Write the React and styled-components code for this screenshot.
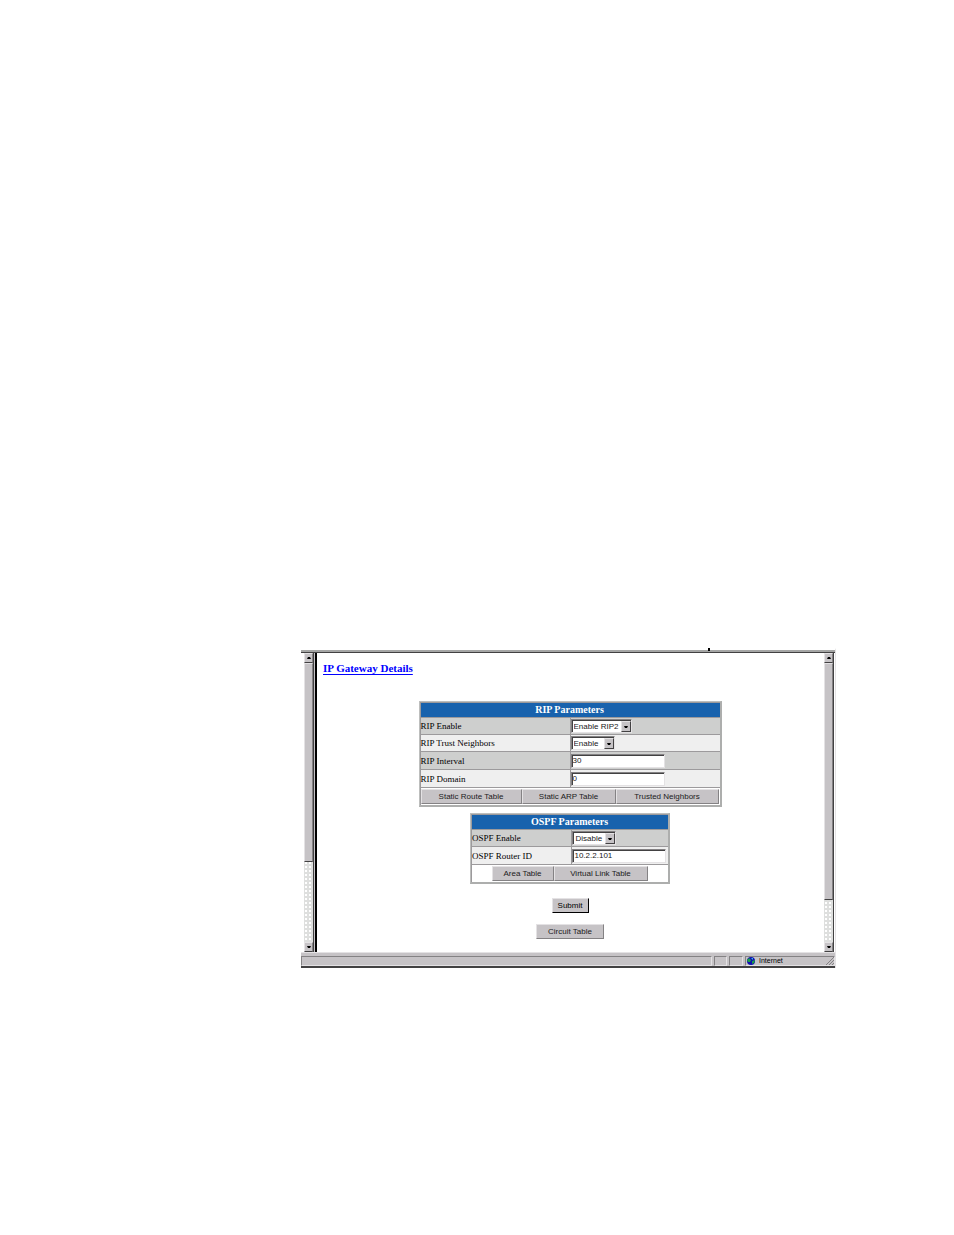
import React from 'react';
import styled, { createGlobalStyle } from 'styled-components';

const colors = {
    face: '#c6c3c6',
    light: '#e4e2e4',
    shadow: '#848284',
    dark: '#424142',
    header: '#1862ad',
    grid: '#9c9a9c',
    rowDark: '#cecfce',
    rowLight: '#efefef',
    link: '#0000ff',
};

const sans = `"Liberation Sans", Arial, sans-serif`;
const serif = `"Liberation Serif", "Times New Roman", serif`;

const GlobalStyle = createGlobalStyle`
    *, *::before, *::after {
        box-sizing: border-box;
    }

    body {
        margin: 0;
        background: #fff;
        font-family: ${serif};
    }
`

const Page = styled('div')`
    padding: 648px 118px 260px 301px;
`

const Window = styled('main')`
    position: relative;
    border-right: 1px solid ${colors.light};
    border-top: 2px solid #fff;
`

const Mark = styled('span')`
    position: absolute;
    top: -2px;
    right: 125px;
    width: 2px;
    height: 3px;
    background: #000;
`

const Frames = styled('div')`
    display: flex;
    height: 302px;
    padding: 1px 1px 0 3px;
    border-top: 2px solid #a5a6a5;
    box-shadow: inset 0 1px 0 ${colors.dark};
`

const Bar = styled('div')`
    display: flex;
    flex-direction: column;
    width: 10px;
    border-right: 1px solid ${colors.dark};
    background-color: #dedfde;
    background-image: radial-gradient(#fff 1px, transparent 1px);
    background-size: 4px 4px;
`

const BarButton = styled('button')`
    display: flex;
    align-items: center;
    justify-content: center;
    height: 10px;
    padding: 0;
    border: 1px solid;
    border-color: ${colors.light} ${colors.shadow} ${colors.dark} ${colors.light};
    background: ${colors.face};
`

const Thumb = styled('div')`
    flex: 0 0 ${props => props.$size};
    border: 1px solid;
    border-color: ${colors.light} ${colors.shadow} ${colors.dark} ${colors.light};
    background: ${colors.face};
`

const Track = styled('div')`
    flex: 1;
`

const Divider = styled('div')`
    width: 3px;
    border-left: 1px solid ${colors.face};
    background: #000;
`

const Content = styled('section')`
    flex: 1;
    display: flex;
    flex-direction: column;
    align-items: center;
    padding: 8px 1px 0 0;
`

const Title = styled('h1')`
    align-self: flex-start;
    margin: 0 0 26px 6px;
    font-size: 11px;
    line-height: 14px;

    a {
        color: ${colors.link};
        text-underline-offset: 2px;
    }
`

const Grid = styled('table')`
    width: ${props => props.$width};
    margin-bottom: 6px;
    table-layout: fixed;
    border: 1px solid #bdbebd;
    border-right: 2px solid #adaead;
    border-bottom: 2px solid #adaead;
    border-spacing: 0;
    font-size: 9px;
    line-height: 12px;

    th, td {
        padding: 0 1px 0 0;
        border-top: 1px solid ${colors.grid};
        border-left: 1px solid ${colors.grid};
    }

    th {
        font-weight: normal;
        text-align: left;
    }
`

const HeadRow = styled('tr')`
    height: 15px;
    background: ${colors.header};

    th {
        color: #fff;
        font-size: 10px;
        font-weight: bold;
        text-align: center;
    }
`

const Row = styled('tr')`
    height: ${props => props.$tall ? '18px' : '17px'};
    background: ${props => props.$shaded ? colors.rowDark : colors.rowLight};
`

const ButtonRow = styled('tr')`
    height: 18px;
    background: #fff;
`

const ButtonGroup = styled('div')`
    display: flex;
    justify-content: center;
`

const Button = styled('button')`
    width: ${props => props.$width};
    height: 15px;
    padding: 0;
    border: 1px solid;
    border-color: ${colors.light} ${colors.shadow} ${colors.shadow} ${colors.light};
    background: ${colors.face};
    color: #212021;
    font-family: ${sans};
    font-size: 8px;
    line-height: 12px;
`

const SubmitButton = styled(Button)`
    border-color: ${colors.light} #000 #000 ${colors.light};
    color: #000;
`

const Actions = styled('div')`
    display: flex;
    flex-direction: column;
    align-items: center;
    gap: 11px;
    margin-top: 8px;
`

const TextBox = styled('input')`
    display: block;
    width: 94px;
    height: 14px;
    padding: 0 1px;
    border: 1px solid;
    border-color: ${colors.shadow} ${colors.light} ${colors.light} ${colors.shadow};
    border-radius: 0;
    box-shadow: inset 1px 1px 0 ${colors.dark};
    background: #fff;
    color: #212021;
    font-family: ${sans};
    font-size: 8px;
`

const SelectBox = styled('span')`
    position: relative;
    display: block;
    width: ${props => props.$width};
    height: 14px;

    select {
        appearance: none;
        display: block;
        width: 100%;
        height: 14px;
        padding: 0 2px;
        border: 1px solid;
        border-color: ${colors.shadow} ${colors.light} ${colors.light} ${colors.shadow};
        border-radius: 0;
        box-shadow: inset 1px 1px 0 ${colors.dark};
        background: #fff;
        color: #212021;
        font-family: ${sans};
        font-size: 8px;
    }
`

const SelectArrow = styled('span')`
    position: absolute;
    top: 2px;
    right: 1px;
    display: flex;
    align-items: center;
    justify-content: center;
    width: 10px;
    height: 11px;
    border: 1px solid;
    border-color: ${colors.light} ${colors.dark} ${colors.dark} ${colors.light};
    background: ${colors.face};
    pointer-events: none;
`

const StatusBar = styled('footer')`
    display: flex;
    gap: 2px;
    height: 16px;
    padding-top: 3px;
    border-top: 1px solid ${colors.light};
    border-bottom: 2px solid ${colors.dark};
    background: ${colors.face};
`

const StatusPanel = styled('div')`
    flex: ${props => props.$width ? `0 0 ${props.$width}` : '1'};
    display: flex;
    align-items: center;
    gap: 4px;
    height: 10px;
    padding-left: 1px;
    border: 1px solid;
    border-color: ${colors.shadow} ${colors.light} ${colors.light} ${colors.shadow};
    font-family: ${sans};
    font-size: 7px;
    line-height: 8px;
`

const Grip = styled('svg')`
    margin-left: auto;
`

const Arrow = ({ up }) => (
    <svg width="4" height="2" viewBox="0 0 4 2" aria-hidden="true">
        <path d={up ? 'M0 2L1 0H3L4 2Z' : 'M0 0H4L3 2H1Z'} fill="#000" />
    </svg>
)

const ScrollBar = ({ size }) => (
    <Bar>
        <BarButton aria-label="Scroll up"><Arrow up /></BarButton>
        <Thumb $size={size} />
        <Track />
        <BarButton aria-label="Scroll down"><Arrow /></BarButton>
    </Bar>
)

const Select = ({ id, value, width }) => (
    <SelectBox $width={width}>
        <select id={id} defaultValue={value}>
            <option>{value}</option>
        </select>
        <SelectArrow><Arrow /></SelectArrow>
    </SelectBox>
)

const Field = ({ id, label, shaded, tall, children }) => (
    <Row $shaded={shaded} $tall={tall}>
        <th scope="row"><label htmlFor={id}>{label}</label></th>
        <td>{children}</td>
    </Row>
)

const App = () => (
    <Page>
        <GlobalStyle />
        <Window>
            <Mark />
            <Frames>
                <ScrollBar size="66.6%" />
                <Divider />
                <Content>
                    <Title><a href="#details">IP Gateway Details</a></Title>
                    <Grid $width="303px">
                        <colgroup>
                            <col width="50%" />
                            <col width="50%" />
                        </colgroup>
                        <thead>
                            <HeadRow><th colSpan="2">RIP Parameters</th></HeadRow>
                        </thead>
                        <tbody>
                            <Field id="rip-enable" label="RIP Enable" shaded>
                                <Select id="rip-enable" value="Enable RIP2" width="61px" />
                            </Field>
                            <Field id="rip-trust" label="RIP Trust Neighbors">
                                <Select id="rip-trust" value="Enable" width="44px" />
                            </Field>
                            <Field id="rip-interval" label="RIP Interval" shaded tall>
                                <TextBox id="rip-interval" defaultValue="30" />
                            </Field>
                            <Field id="rip-domain" label="RIP Domain" tall>
                                <TextBox id="rip-domain" defaultValue="0" />
                            </Field>
                            <ButtonRow>
                                <td colSpan="2">
                                    <ButtonGroup>
                                        <Button $width="101px">Static Route Table</Button>
                                        <Button $width="94px">Static ARP Table</Button>
                                        <Button $width="103px">Trusted Neighbors</Button>
                                    </ButtonGroup>
                                </td>
                            </ButtonRow>
                        </tbody>
                    </Grid>
                    <Grid $width="200px">
                        <colgroup>
                            <col width="51%" />
                            <col width="49%" />
                        </colgroup>
                        <thead>
                            <HeadRow><th colSpan="2">OSPF Parameters</th></HeadRow>
                        </thead>
                        <tbody>
                            <Field id="ospf-enable" label="OSPF Enable" shaded>
                                <Select id="ospf-enable" value="Disable" width="44px" />
                            </Field>
                            <Field id="ospf-router" label="OSPF Router ID" tall>
                                <TextBox id="ospf-router" defaultValue="10.2.2.101" />
                            </Field>
                            <ButtonRow>
                                <td colSpan="2">
                                    <ButtonGroup>
                                        <Button $width="62px">Area Table</Button>
                                        <Button $width="94px">Virtual Link Table</Button>
                                    </ButtonGroup>
                                </td>
                            </ButtonRow>
                        </tbody>
                    </Grid>
                    <Actions>
                        <SubmitButton $width="37px">Submit</SubmitButton>
                        <Button $width="68px">Circuit Table</Button>
                    </Actions>
                </Content>
                <ScrollBar size="79.3%" />
            </Frames>
            <StatusBar>
                <StatusPanel />
                <StatusPanel $width="13px" />
                <StatusPanel $width="14px" />
                <StatusPanel $width="90px">
                    <svg width="8" height="8" viewBox="0 0 8 8" aria-hidden="true">
                        <circle cx="4" cy="4" r="4" fill="#1010b0" />
                        <path d="M0 3L2 1L4 3L3 5L1 5ZM5 4L8 3L7 6L5 7Z" fill="#18a048" />
                        <path d="M4 1L6 1L6 3Z" fill="#30c0e0" />
                    </svg>
                    Internet
                    <Grip width="8" height="8" viewBox="0 0 8 8" aria-hidden="true">
                        <path d="M0 8L8 0M3 8L8 3M6 8L8 6" stroke="#848284" />
                    </Grip>
                </StatusPanel>
            </StatusBar>
        </Window>
    </Page>
)

export default App;
